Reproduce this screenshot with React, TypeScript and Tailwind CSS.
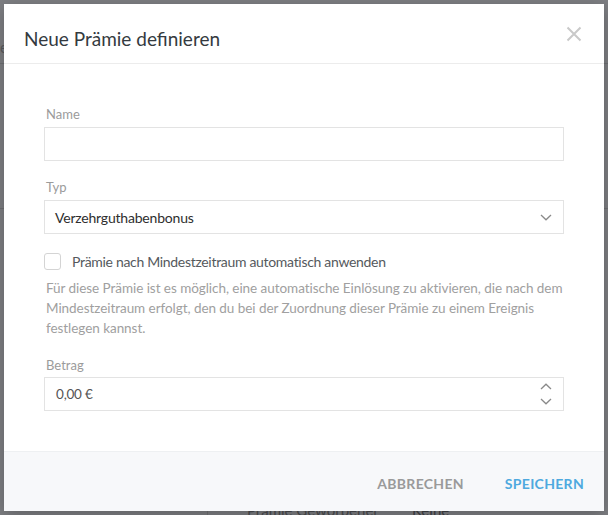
import React from "react";

const font = { fontFamily: "Lato, 'Open Sans', sans-serif" };

function Chevron({ up = false }: { up?: boolean }) {
  return (
    <svg width="12" height="7" viewBox="0 0 12 7" fill="none" className="block">
      {up ? (
        <path d="M1 6L6 1.2L11 6" stroke="#8a8a8a" strokeWidth="1.3" />
      ) : (
        <path d="M1 1L6 5.8L11 1" stroke="#8a8a8a" strokeWidth="1.3" />
      )}
    </svg>
  );
}

export default function App() {
  return (
    <div className="relative h-[515px] w-[608px] overflow-hidden bg-[#7e7f83]" style={font}>
      {/* faint page content behind the overlay */}
      <div className="absolute left-0 top-[40px] text-[15px] text-[#5a5b5e] leading-none">e</div>
      <div className="absolute left-0 top-[63px] h-px w-[4px] bg-[#6f7073]" />
      <div className="absolute left-0 top-[208px] h-px w-[4px] bg-[#6f7073]" />
      <div className="absolute right-0 top-[63px] h-px w-[4px] bg-[#6f7073]" />
      <div className="absolute right-0 top-[208px] h-px w-[4px] bg-[#6f7073]" />
      <div className="absolute left-[207px] top-[511px] h-[4px] w-px bg-[#6f7073]" />
      <div className="absolute left-[247px] top-[503px] text-[15px] leading-none text-[#4a4b4e]">Prämie Geworbener</div>
      <div className="absolute left-[412px] top-[503px] text-[15px] leading-none text-[#3f4043]">Keine</div>

      {/* modal */}
      <div className="relative ml-[4px] mt-[4px] flex h-[507px] w-[600px] flex-col bg-white shadow-[0_4px_16px_rgba(0,0,0,0.25)]">
        <div className="relative border-b border-[#ececec] pl-[20px] pt-[23px] pb-[12px]">
          <h2 className="text-[19px] leading-[24px] text-[#343a40]">Neue Prämie definieren</h2>
          <button className="absolute right-[22px] top-[22px] flex h-[16px] w-[16px] items-center justify-center">
            <svg width="16" height="16" viewBox="0 0 16 16" fill="none">
              <path d="M1.5 1.5L14.5 14.5M14.5 1.5L1.5 14.5" stroke="#c9c9c9" strokeWidth="2" />
            </svg>
          </button>
        </div>

        <div className="flex flex-1 flex-col px-[40px] pt-[41px]">
          <label className="pl-[2px] text-[13px] leading-[18px] text-[#9b9b9b]">Name</label>
          <div className="mt-[4px] h-[34px] w-[520px] border border-[#e3e3e3] bg-white" />

          <label className="mt-[17px] pl-[2px] text-[13px] leading-[18px] text-[#9b9b9b]">Typ</label>
          <div className="mt-[4px] flex h-[34px] w-[520px] items-center justify-between border border-[#e3e3e3] bg-white pl-[10px] pr-[11px]">
            <span className="text-[14px] tracking-[-0.2px] text-[#2e2e2e]">Verzehrguthabenbonus</span>
            <Chevron />
          </div>

          <div className="mt-[17px] flex h-[20px] items-center">
            <div className="h-[17px] w-[17px] rounded-[3px] border border-[#d4d4d4] bg-white" />
            <span className="ml-[11px] text-[14px] tracking-[-0.31px] text-[#55595d]">Prämie nach Mindestzeitraum automatisch anwenden</span>
          </div>

          <p className="mt-[7px] w-[540px] whitespace-nowrap pl-[2px] text-[13.5px] leading-[20px] tracking-[-0.05px] text-[#a0a0a0]">
            Für diese Prämie ist es möglich, eine automatische Einlösung zu aktivieren, die nach dem
            <br />
            Mindestzeitraum erfolgt, den du bei der Zuordnung dieser Prämie zu einem Ereignis
            <br />
            festlegen kannst.
          </p>

          <label className="mt-[18px] pl-[2px] text-[13px] leading-[18px] text-[#9b9b9b]">Betrag</label>
          <div className="mt-[3px] flex h-[34px] w-[520px] items-center justify-between border border-[#e3e3e3] bg-white pl-[11px] pr-[11px]">
            <span className="text-[13.5px] tracking-[-0.2px] text-[#555]">0,00 €</span>
            <div className="flex flex-col gap-[8px]">
              <Chevron up />
              <Chevron />
            </div>
          </div>
        </div>

        <div className="flex h-[60px] items-center justify-end gap-[41px] border-t border-[#eef0f2] bg-[#f7f8fa] pr-[20px] pt-[3px]">
          <button className="text-[14px] font-bold tracking-[0.3px] text-[#9a9a9a]">ABBRECHEN</button>
          <button className="text-[14px] font-bold tracking-[0.3px] text-[#4ea9df]">SPEICHERN</button>
        </div>
      </div>
    </div>
  );
}
